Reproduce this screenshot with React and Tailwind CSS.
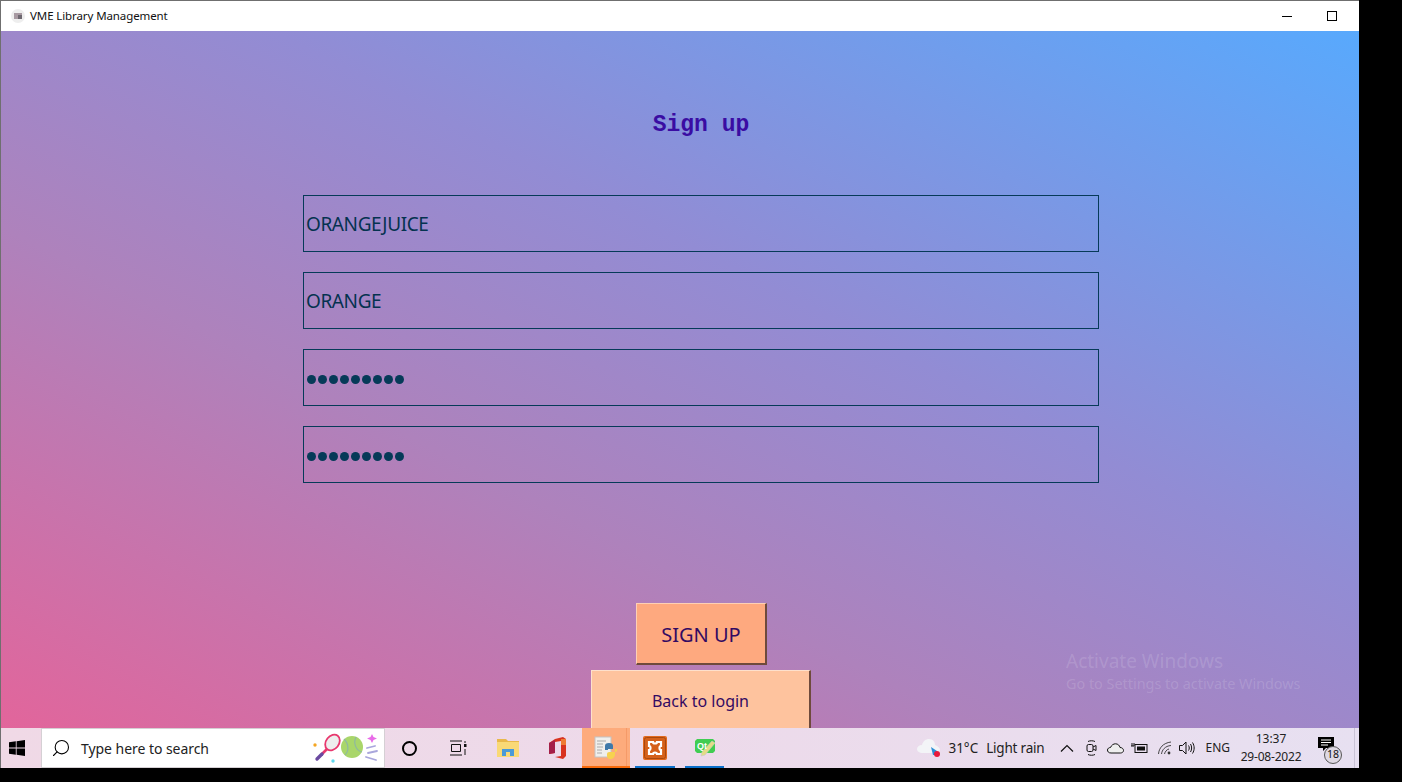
import React from "react";
import { Search } from "lucide-react";

const ui = { fontFamily: '"Noto Sans", "Open Sans", sans-serif' };

function Field({ value, password }) {
  return (
    <div className="h-[57px] w-[796px] border border-[#063a58] flex items-center pl-[2px] text-[#04324f] text-[19px]">
      {password ? (
        <div className="flex gap-[2px] ml-[1px] mt-[4px]">
          {Array.from({ length: 9 }).map((_, i) => (
            <span key={i} className="w-[9px] h-[9px] rounded-full bg-[#063a58]" />
          ))}
        </div>
      ) : (
        <span className="tracking-[-0.4px] mt-[2px]">{value}</span>
      )}
    </div>
  );
}

function Racket() {
  return (
    <svg width="66" height="30" viewBox="0 0 66 30" className="shrink-0">
      <circle cx="3" cy="12" r="1.7" fill="#f5a623" />
      <circle cx="21" cy="28" r="1.7" fill="#5fd8ee" />
      <ellipse cx="20.5" cy="9.5" rx="6.5" ry="8.5" transform="rotate(38 20.5 9.5)" fill="#eee" stroke="#e8386e" strokeWidth="1.8" />
      <path d="M15 16 L10 21" stroke="#e8386e" strokeWidth="2.6" />
      <path d="M10 21 L5 26" stroke="#6a4aa0" strokeWidth="3.4" strokeLinecap="round" />
      <circle cx="40" cy="14" r="11" fill="#a9d66a" />
      <path d="M32 6 C37 11 37 18 33 22 M44 4 C41 10 44 18 50 19" stroke="#8fb8a0" strokeWidth="1.2" fill="none" />
      <path d="M60 1 L61.5 4 L65 5.5 L61.5 7 L60 10 L58.5 7 L55 5.5 L58.5 4 Z" fill="#e96be8" />
      <path d="M55 15 L63 13 M56 20 L65 18 M54 24 L64 27" stroke="#a9a6dc" strokeWidth="1.8" strokeLinecap="round" />
    </svg>
  );
}

function TaskIcon({ w = 48, active, running, children }) {
  return (
    <div
      className={`relative h-full flex items-center justify-center shrink-0 ${active ? "bg-[#fdab7c]" : ""}`}
      style={{ width: w }}
    >
      {children}
      {active && <div className="absolute top-0 bottom-0 right-[3px] w-[1px] bg-[#f59a68]" />}
      {active && <div className="absolute bottom-0 inset-x-0 h-[2px] bg-[#f76b0d]" />}
      {running && <div className="absolute bottom-0 left-[5px] right-[5px] h-[2px] bg-[#0b6fc9]" />}
    </div>
  );
}

export default function App() {
  return (
    <div className="w-[1402px] h-[782px] bg-black overflow-hidden" style={ui}>
      <div className="w-[1359px] h-[768px] flex flex-col border-t border-l border-[#6f6f6f] bg-white">
        {/* title bar */}
        <div className="h-[30px] shrink-0 flex items-center bg-white pl-[10px]">
          <svg width="14" height="14" viewBox="0 0 14 14" className="mr-[5px]">
            <circle cx="7" cy="7" r="7" fill="#eeeeee" />
            <rect x="3" y="4" width="8" height="6" fill="#a89aa2" />
            <rect x="7" y="6" width="4" height="4" fill="#6e6870" />
          </svg>
          <span className="text-[11.5px] text-[#111] tracking-[-0.1px]">VME Library Management</span>
          <div className="ml-auto flex items-center h-full">
            <div className="w-[10px] h-[1px] bg-black mr-[35px]" />
            <div className="w-[10px] h-[10px] border border-black mr-[22px]" />
          </div>
        </div>

        {/* content */}
        <div className="relative flex-1 min-h-0 overflow-hidden flex flex-col items-center pl-[42px] bg-[linear-gradient(to_top_right,#e2659b_0%,#ae82bc_36%,#928cd4_60%,#58a9fd_100%)]">
          <h1
            className="mt-[80px] h-[28px] leading-[28px] text-[23px] font-bold text-[#3a0ca3]"
            style={{ fontFamily: '"Liberation Mono", monospace' }}
          >
            Sign up
          </h1>
          <div className="mt-[56px] flex flex-col gap-[20px]">
            <Field value="ORANGEJUICE" />
            <Field value="ORANGE" />
            <Field password />
            <Field password />
          </div>
          <button className="mt-[120px] ml-[1px] w-[131px] h-[62px] shrink-0 bg-[#fea97f] text-[#330a62] text-[20px] pt-[2px] border border-t-[#fed0b4] border-l-[#fed0b4] border-r-2 border-b-2 border-r-[#6e4a3c] border-b-[#6e4a3c]">
            SIGN UP
          </button>
          <button className="mt-[5px] w-[220px] h-[62px] shrink-0 bg-[#fec39e] text-[#330a62] text-[16px] border border-t-[#fee0cc] border-l-[#fee0cc] border-r-2 border-b-2 border-r-[#6e4a3c] border-b-[#6e4a3c]">
            Back to login
          </button>

          <div className="absolute left-[1065px] top-[621px] text-white/15 leading-none">
            <div className="text-[19px]">Activate Windows</div>
            <div className="text-[14.4px] mt-[6px]">Go to Settings to activate Windows</div>
          </div>
        </div>

        {/* taskbar */}
        <div className="h-[40px] shrink-0 flex items-center bg-[linear-gradient(to_right,#f0d9e6,#eddaea_50%,#e7e0f1)] text-[#111]">
          <div className="w-[40px] h-full flex items-center pl-[8px]">
            <svg width="16" height="16" viewBox="0 0 16 16" fill="#000">
              <path d="M0 2.3 L6.8 1.3 V7.6 H0 Z M7.6 1.2 L16 0 V7.6 H7.6 Z M0 8.4 H6.8 V14.7 L0 13.7 Z M7.6 8.4 H16 V16 L7.6 14.8 Z" />
            </svg>
          </div>
          <div className="w-[344px] h-full bg-white border border-[#d5d0d4] flex items-center pl-[9px] pr-[6px]">
            <Search size={20} strokeWidth={1.3} className="-scale-x-100 text-black" />
            <span className="ml-[10px] text-[14px] text-[#222] tracking-[-0.05px]">Type here to search</span>
            <div className="ml-auto"><Racket /></div>
          </div>

          <div className="flex h-full items-center">
            <TaskIcon w={48}>
              <div className="w-[15px] h-[15px] rounded-full border-2 border-black" />
            </TaskIcon>
            <TaskIcon w={50}>
              <svg width="17" height="16" viewBox="0 0 17 16" fill="none" stroke="#111" strokeWidth="1">
                <path d="M0 1 H12 M0 15 H12 M1.5 4.5 H10.5 V11.5 H1.5 Z" />
                <rect x="14" y="4" width="2.5" height="3" fill="#111" stroke="none" />
                <path d="M15 1 V3 M15 9 V15" />
              </svg>
            </TaskIcon>
            <TaskIcon w={50}>
              <svg width="22" height="18" viewBox="0 0 22 18">
                <path d="M0 0 H9 L11 2 H22 V18 H0 Z" fill="#e9b84a" />
                <rect x="0" y="3" width="22" height="15" fill="#f9d976" />
                <path d="M5 17 V10 H17 V17 H13 V13 H9 V17 Z" fill="#4a9ad8" />
              </svg>
            </TaskIcon>
            <TaskIcon w={47}>
              <svg width="18" height="22" viewBox="0 0 18 22">
                <path d="M7 2 L15 0 L18 2 V19 L15 22 L7 20 L13 19 V4 L7 5 V16 L1 17 V6 Z" fill="#d8321f" />
                <path d="M1 6 L7 3 V16 L1 17 Z" fill="#a41f48" />
                <path d="M13 2 L18 2 V8 H13 Z" fill="#ef7b33" />
              </svg>
            </TaskIcon>
            <div className="w-[2px] shrink-0" />
            <TaskIcon w={48} active>
              <svg width="24" height="24" viewBox="0 0 24 24">
                <rect x="1" y="1" width="16" height="20" fill="#f0efec" stroke="#c4c4c4" />
                <path d="M3 5 H12 M3 8 H9 M3 11 H9 M3 14 H8 M3 17 H8" stroke="#aaa" strokeWidth="1" />
                <path d="M11 10 C11 8 12 7 15 7 C18 7 19 8 19 10 V13 H14 V14 H19 L11 14 Z" fill="#3f79a9" />
                <path d="M23 13 C23 15 23 16 21 16 V18 C21 21 19 23 16 23 C14 23 13 21 13 20 V18 C13 16 15 16 17 16 H21 V13 Z" fill="#f6d24f" />
              </svg>
            </TaskIcon>
            <TaskIcon w={50} running>
              <svg width="24" height="24" viewBox="0 0 24 24">
                <rect width="24" height="24" rx="2" fill="#e2691d" />
                <rect x="1.5" y="1.5" width="21" height="21" rx="2" fill="#d5601a" stroke="#a8480f" />
                <path d="M6 6 H10 C10 8 14 8 14 6 H18 V10 C16 10 16 14 18 14 V18 H14 C14 16 10 16 10 18 H6 V14 C8 14 8 10 6 10 Z" fill="none" stroke="#fff" strokeWidth="2.2" />
              </svg>
            </TaskIcon>
            <TaskIcon w={49} running>
              <svg width="22" height="20" viewBox="0 0 22 20">
                <path d="M3 1 H19 L21 3 V13 L19 15 H3 L1 13 V3 Z" fill="#41cd52" />
                <path d="M8 14 L18 3 L21 5 L11 17 L7 18 Z" fill="#e4dc86" stroke="#c9c9c9" strokeWidth="0.6" />
                <text x="3" y="11" fontSize="9" fontWeight="700" fill="#fff" style={{ fontFamily: "Liberation Sans" }}>Qt</text>
              </svg>
            </TaskIcon>
          </div>

          <div className="ml-auto flex h-full items-center">
            <svg width="24" height="20" viewBox="0 0 24 20" className="mr-[7px]">
              <path d="M6 15 C2 15 0 13 0 11 C0 9 2 7 5 7 C6 3 9 1 12 1 C16 1 18 4 18 7 C21 8 23 10 23 12 C23 14 21 15 19 15 Z" fill="#f3f4f7" />
              <path d="M14 9 L20 13 V17 H16 Z" fill="#2a8fd6" />
              <circle cx="20" cy="16" r="3" fill="#e8193c" />
            </svg>
            <span className="text-[13.5px] text-[#222] mr-[8px]">31°C</span>
            <span className="text-[13.5px] text-[#222] tracking-[-0.2px] mr-[16px]">Light rain</span>
            <svg width="14" height="8" viewBox="0 0 14 8" fill="none" stroke="#111" strokeWidth="1.2" className="mr-[12px]">
              <path d="M1 7.5 L7 1.5 L13 7.5" />
            </svg>
            <svg width="11" height="16" viewBox="0 0 11 16" fill="none" stroke="#111" strokeWidth="1" className="mr-[10px]">
              <path d="M2 1.5 C4 .5 7 .5 9 1.5 M2 14.5 C4 15.5 7 15.5 9 14.5" />
              <rect x="1" y="4.5" width="6" height="7" rx="1.5" />
              <path d="M7 7 L10 5.5 V10.5 L7 9" />
            </svg>
            <svg width="17" height="11" viewBox="0 0 17 11" fill="none" stroke="#111" strokeWidth="1" className="mr-[7px]">
              <path d="M4 10 C1.5 10 .5 8.5 .5 7 C.5 5.5 2 4.5 3.5 4.5 C4.5 2 6.5 .8 8.5 .8 C11 .8 12.5 2.5 13 4.5 C15 4.5 16.5 5.8 16.5 7.5 C16.5 9 15 10 13.5 10 Z" fill="#eee" />
            </svg>
            <svg width="17" height="12" viewBox="0 0 17 12" className="mr-[10px]">
              <rect x="4" y="2.5" width="12" height="8" fill="none" stroke="#111" />
              <rect x="6" y="4.5" width="8" height="4" fill="#111" />
              <path d="M0 4 H3 M1 1 V4 M3 1 V4" stroke="#111" />
            </svg>
            <svg width="14" height="14" viewBox="0 0 14 14" fill="none" stroke="#333" strokeWidth="0.9" className="mr-[7px]">
              <path d="M.5 13 C1 7 5 2 13 1 M3.5 13 C4 9 7 5 13 4.5 M6.5 13 C7 11 8.5 8.5 11 8" />
              <circle cx="11" cy="12" r="1.4" fill="#333" stroke="none" />
            </svg>
            <svg width="16" height="14" viewBox="0 0 16 14" fill="none" stroke="#111" strokeWidth="1" className="mr-[10px]">
              <path d="M.5 4.5 H3.5 L7 1 V13 L3.5 9.5 H.5 Z" />
              <path d="M9.5 4.5 C10.5 6 10.5 8 9.5 9.5 M11.5 3 C13 5.5 13 8.5 11.5 11 M13.5 1.5 C15.7 5 15.7 9 13.5 12.5" />
            </svg>
            <span className="text-[12px] text-[#222] mr-[9px]">ENG</span>
            <div className="w-[64px] text-center text-[12px] leading-[18px] text-[#222] mr-[15px]">
              <div>13:37</div>
              <div className="tracking-[-0.2px] whitespace-nowrap">29-08-2022</div>
            </div>
            <div className="relative w-[33px] h-full mr-[3px] flex items-center">
              <svg width="16" height="15" viewBox="0 0 16 15" className="-mt-[7px]">
                <path d="M0 0 H16 V11 H8 L5 14 V11 H0 Z" fill="#000" />
                <path d="M3 3 H13 M3 5.5 H13 M3 8 H10" stroke="#fff" strokeWidth="1" />
              </svg>
              <div className="absolute left-[6px] top-[18px] w-[18px] h-[18px] rounded-full bg-[#dfd9e4] border border-[#555] flex items-center justify-center text-[10.5px] text-[#111]">18</div>
            </div>
            <div className="w-[1px] h-full bg-[#c9c3d6] mr-[4px]" />
          </div>
        </div>
      </div>
    </div>
  );
}
